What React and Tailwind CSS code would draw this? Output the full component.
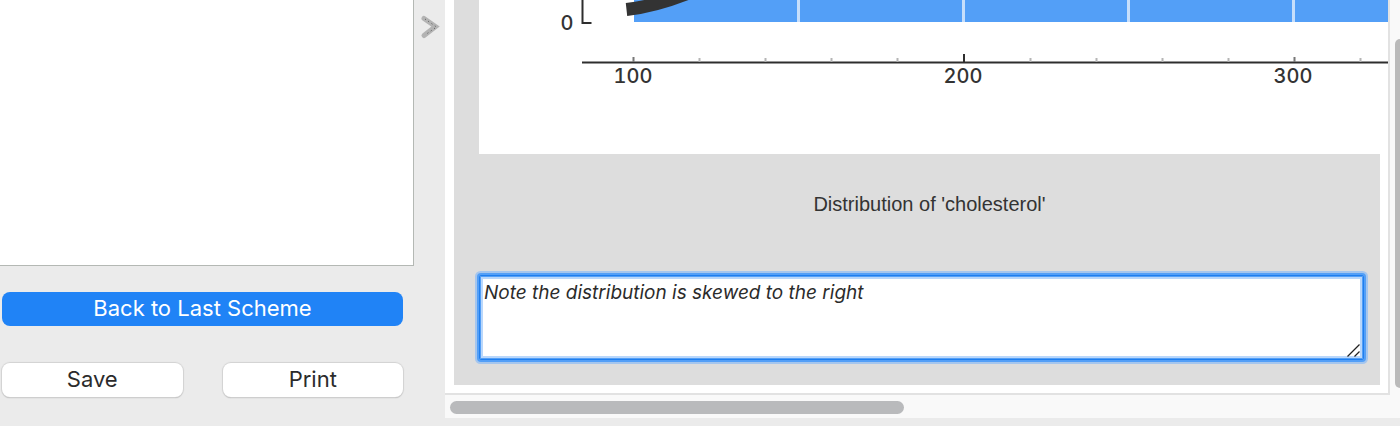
const gridLines = [318, 483, 648, 813];
const minorTicks = [220, 286, 352, 418, 551, 617, 683, 749, 881];

function Chart() {
  return (
    <svg
      className="block h-[154px] w-[980px] max-w-none shrink-0 bg-white"
      viewBox="0 0 980 154"
      role="img"
      aria-label="Histogram of cholesterol"
    >
      <rect x="155" y="0" width="825" height="22" fill="#539ff7" />
      {gridLines.map((x) => (
        <rect key={x} x={x} y="0" width="3" height="22" fill="#c6defb" />
      ))}
      <path d="M147.5 9.5C170 7 190 1 212 -8" fill="none" stroke="#333" strokeWidth="13" />
      <path d="M103.500 0V23H112.500" fill="none" stroke="#2e2e2e" strokeWidth="2" />
      <path d="M103 62.500H980" fill="none" stroke="#2e2e2e" strokeWidth="2" />
      {minorTicks.map((x) => (
        <path key={x} d={`M${x + 0.5} 58V62`} stroke="#b5b5b5" strokeWidth="2" />
      ))}
      <path d="M154.500 57V62M815.500 57V62" stroke="#777" strokeWidth="2" />
      <path d="M485 54V62" stroke="#2e2e2e" strokeWidth="2" />
      <g
        className="font-['Inter',sans-serif] text-[20px] font-medium tabular-nums"
        fill="#333"
        textAnchor="middle"
      >
        <text x="88" y="30">0</text>
        <text x="154" y="83">100</text>
        <text x="484" y="83">200</text>
        <text x="814" y="83">300</text>
      </g>
    </svg>
  );
}

function PushButton({ children }) {
  return (
    <button
      type="button"
      className="flex h-[34px] flex-1 justify-center rounded-lg bg-white text-[22px] leading-8 text-[#2b2b2b] shadow-[0_0_1px_1px_#d2d2d2,0_1px_1px_#a8a8a8]"
    >
      {children}
    </button>
  );
}

function Sidebar() {
  return (
    <aside className="flex w-[414px] shrink-0 flex-col">
      <div className="h-[266px] border-r border-b border-[#b4b8b4] bg-white" />
      <div className="flex flex-col gap-[37px] pt-[26px] pr-[11px] pl-[2px]">
        <button
          type="button"
          className="flex h-[34px] justify-center rounded-lg bg-[#2083f6] text-[22px] leading-8 text-white"
        >
          Back to Last Scheme
        </button>
        <div className="flex gap-10">
          <PushButton>Save</PushButton>
          <PushButton>Print</PushButton>
        </div>
      </div>
    </aside>
  );
}

function Report() {
  return (
    <div className="overflow-hidden border-r-2 border-b-2 border-[#e2e2e2] bg-white pr-2 pb-2 pl-[9px]">
      <section className="bg-[#dddddd] pb-[25px] pl-[25px]">
        <Chart />
        <h2 className="pt-9 text-center font-['Liberation_Sans',sans-serif] text-[20px] leading-7 text-[#333]">
          Distribution of 'cholesterol'
        </h2>
        <div className="relative mt-[57px] mr-4">
          <textarea
            aria-label="Comment"
            defaultValue="Note the distribution is skewed to the right"
            className="block h-[85px] w-full resize-none rounded-xs border border-[#1f7eee] bg-white px-1 py-[5px] text-[19px] leading-6 text-[#2b2b2b] italic shadow-[0_0_0_2px_#539ff7,0_0_0_4px_#a5c6ee,inset_0_0_0_1px_#539ff7,inset_0_0_0_3px_#b9d7fb] outline-none"
          />
          <svg
            className="pointer-events-none absolute right-1 bottom-[3px] h-[13px] w-[13px]"
            viewBox="0 0 13 13"
            aria-hidden="true"
          >
            <path d="M0.500 12.500L12.500 0.500M7.500 12.500L12.500 7.500" stroke="#222" strokeWidth="1.3" />
          </svg>
        </div>
      </section>
    </div>
  );
}

export default function App() {
  return (
    <main className="flex min-h-screen overflow-hidden bg-[#ebebeb] font-['Inter',sans-serif]">
      <Sidebar />
      <button
        type="button"
        aria-label="Collapse sidebar"
        className="flex w-[31px] shrink-0 items-start justify-center pt-[14px]"
      >
        <svg className="h-[26px] w-5" viewBox="0 0 20 26" fill="none" aria-hidden="true">
          <path d="M4 4.500L15.500 12.500L4 21.500" stroke="#b3b3b3" strokeWidth="5" strokeLinecap="round" />
          <path d="M5 5L16.500 13L5 21" stroke="#555" strokeWidth="1" strokeDasharray="1 3" />
        </svg>
      </button>
      <div className="flex min-w-0 flex-1 flex-col">
        <div className="flex">
          <div className="min-w-0 flex-1">
            <Report />
          </div>
          <div className="flex w-[10px] shrink-0 flex-col items-end bg-[#f9f9f9] pt-[39px]">
            <div className="h-[349px] w-[5px] rounded-l-md bg-[#bababa]" />
          </div>
        </div>
        <div className="h-[23px] bg-[#f9f9f9] px-[5px] py-[6px]">
          <div className="h-[13px] w-[48%] rounded-full bg-[#b9babc]" />
        </div>
      </div>
    </main>
  );
}
